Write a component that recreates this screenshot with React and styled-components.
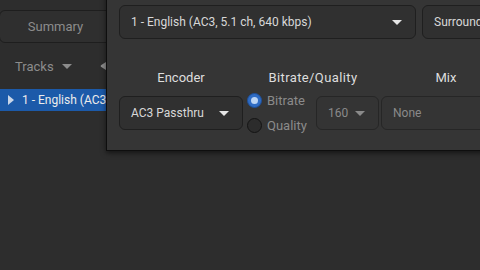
import React from "react";
import styled, { createGlobalStyle } from "styled-components";

const Global = createGlobalStyle`
  html, body { margin: 0; padding: 0; background: #2d2d2d; overflow: hidden; }
  body { font-family: Roboto, "Noto Sans", sans-serif; width: 480px; height: 270px; }
  * { box-sizing: border-box; }
`;

const Page = styled.div`
  position: relative;
  width: 480px;
  height: 270px;
  background: #2d2d2d;
  overflow: hidden;
`;

const Sidebar = styled.div`
  width: 130px;
  display: flex;
  flex-direction: column;
  padding-top: 10px;
`;

const SummaryButton = styled.div`
  margin-left: -1px;
  width: 113px;
  height: 33px;
  border: 1px solid #1e1e1e;
  border-radius: 6px;
  background: #2f2f2f;
  color: #8c8c8c;
  font-size: 13px;
  display: flex;
  align-items: center;
  justify-content: center;
`;

const TracksRow = styled.div`
  height: 46px;
  display: flex;
  align-items: center;
  padding-left: 15px;
  color: #8c8c8c;
  font-size: 13px;
  gap: 8px;
`;

const SideIcon = styled.svg`
  flex: none;
  margin-left: 19px;
`;

const TrackItem = styled.div`
  height: 22px;
  background: #1c5aa9;
  display: flex;
  align-items: center;
  padding-left: 8px;
  gap: 8px;
  color: #ececec;
  font-size: 12px;
  white-space: nowrap;
  overflow: hidden;
`;

const Expander = styled.svg`
  flex: none;
`;

const Popover = styled.div`
  position: absolute;
  left: 106px;
  top: -8px;
  width: 420px;
  height: 159px;
  background: #353535;
  border: 1px solid #0e0e0e;
  box-shadow: 0 2px 5px rgba(0, 0, 0, 0.55);
  padding: 12px 0 0 12px;
  display: flex;
  flex-direction: column;
`;

const TopRow = styled.div`
  display: flex;
  gap: 6px;
`;

const Combo = styled.div`
  width: ${p => p.w}px;
  height: 34px;
  flex: none;
  border: 1px solid ${p => (p.disabled ? "#262626" : "#1f1f1f")};
  border-radius: 6px;
  background: ${p => (p.disabled ? "#343434" : "#303030")};
  color: ${p => (p.disabled ? "#8a8a8a" : "#d8d8d8")};
  font-size: 12px;
  display: flex;
  align-items: center;
  justify-content: space-between;
  padding: 0 13px 0 11px;
  white-space: nowrap;
  overflow: hidden;
`;

const Arrow = styled.span`
  flex: none;
  width: 0;
  height: 0;
  border-left: 5px solid transparent;
  border-right: 5px solid transparent;
  border-top: 5px solid ${p => p.c || "#e6e6e6"};
  margin-top: 1px;
`;

const Grid = styled.div`
  margin-top: 27px;
  display: grid;
  grid-template-columns: 124px 4px 132px 2px 130px;
  grid-template-rows: 22px 34px;
  row-gap: 8px;
`;

const Label = styled.div`
  grid-column: ${p => p.col};
  display: flex;
  align-items: center;
  justify-content: center;
  color: #dedede;
  font-size: 13px;
  letter-spacing: ${p => p.ls || 0}px;
`;

const Cell = styled.div`
  grid-column: ${p => p.col};
  display: flex;
  gap: ${p => p.gap || 0}px;
`;

const RadioCol = styled.div`
  display: flex;
  flex-direction: column;
  justify-content: center;
  gap: 9px;
  margin: -8px 0;
`;

const RadioRow = styled.div`
  display: flex;
  align-items: center;
  gap: 5px;
  color: #8b8b8b;
  font-size: 13px;
  height: 16px;
`;

const RadioDot = styled.span`
  width: 15px;
  height: 15px;
  border-radius: 50%;
  flex: none;
  ${p =>
    p.on
      ? `background: #2f6cc4; border: 1px solid #1d4f99; display:flex; align-items:center; justify-content:center;
         &::after { content: ""; width: 7px; height: 7px; border-radius: 50%; background: #bcd5f5; }`
      : `background: #2c2c2c; border: 1px solid #141414;`}
`;

export default function App() {
  return (
    <Page>
      <Global />
      <Sidebar>
        <SummaryButton>Summary</SummaryButton>
        <TracksRow>
          <span>Tracks</span>
          <Arrow c="#8c8c8c" />
          <SideIcon width="12" height="12" viewBox="0 0 12 12">
            <path d="M10 1.5 L3 6 L10 10.5 Z" fill="#8c8c8c" stroke="#8c8c8c" strokeWidth="2.5" strokeLinejoin="round" />
          </SideIcon>
        </TracksRow>
        <TrackItem>
          <Expander width="6" height="10" viewBox="0 0 6 10">
            <path d="M0 0 L6 5 L0 10 Z" fill="#c9d6e8" />
          </Expander>
          <span>1 - English (AC3, 5.1 ch, 640 kbps)</span>
        </TrackItem>
      </Sidebar>
      <Popover>
        <TopRow>
          <Combo w={297}>
            <span>1 - English (AC3, 5.1 ch, 640 kbps)</span>
            <Arrow />
          </Combo>
          <Combo w={110}>Surround</Combo>
        </TopRow>
        <Grid>
          <Label col="1">Encoder</Label>
          <Label col="3" ls={0.4}>Bitrate/Quality</Label>
          <Label col="5">Mix</Label>
          <Cell col="1">
            <Combo w={124}>
              <span>AC3 Passthru</span>
              <Arrow />
            </Combo>
          </Cell>
          <Cell col="3" gap={9}>
            <RadioCol>
              <RadioRow>
                <RadioDot on />
                <span>Bitrate</span>
              </RadioRow>
              <RadioRow>
                <RadioDot />
                <span>Quality</span>
              </RadioRow>
            </RadioCol>
            <Combo w={63} disabled>
              <span>160</span>
              <Arrow c="#8a8a8a" />
            </Combo>
          </Cell>
          <Cell col="5">
            <Combo w={130} disabled>
              <span>None</span>
            </Combo>
          </Cell>
        </Grid>
      </Popover>
    </Page>
  );
}
